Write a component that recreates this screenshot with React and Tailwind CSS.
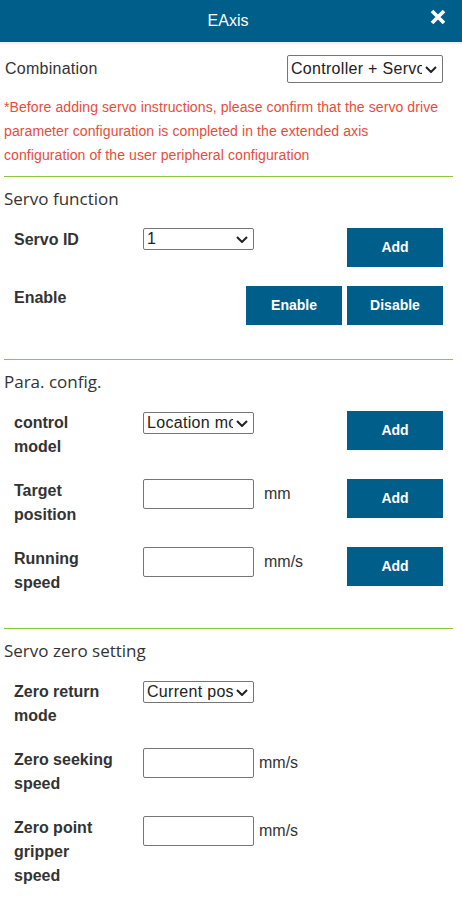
import React from "react";

function Chevron() {
  return (
    <svg width="12" height="7" viewBox="0 0 12 7" className="shrink-0 ml-[3px] mr-[5px]">
      <path d="M1 1l5 5 5-5" fill="none" stroke="#222" strokeWidth="2" />
    </svg>
  );
}

function Select({ value, className }) {
  return (
    <div className={`flex items-center border border-[#767676] rounded-[2px] bg-white ${className}`}>
      <span className="flex-1 min-w-0 overflow-hidden whitespace-nowrap pl-[3px] text-[16px] leading-[20px] tracking-[0.3px] text-[#222]">
        {value}
      </span>
      <Chevron />
    </div>
  );
}

function Btn({ children }) {
  return (
    <button className="w-[96px] h-[39px] bg-[#005e8a] text-white font-bold text-[14px] shrink-0">
      {children}
    </button>
  );
}

function Label({ children }) {
  return (
    <div className="w-[129px] shrink-0 pr-[27px] font-bold text-[16px] leading-[24px] text-[#333]">
      {children}
    </div>
  );
}

function Field({ unit, gap }) {
  return (
    <div className="flex items-center h-[30px]">
      <div className="w-[111px] h-[30px] border border-[#767676] rounded-[2px] bg-white" />
      {unit && <span className={`${gap} text-[16px] text-[#333]`}>{unit}</span>}
    </div>
  );
}

function Section({ title, gap, pb, children }) {
  return (
    <div>
      <div className="h-px bg-[#8cc63f]" />
      <h3 className="mt-[10px] [font-family:'Open_Sans',sans-serif] text-[17px] leading-[24px] text-[#333]">{title}</h3>
      <div className={`mt-[17px] pl-[10px] pr-[10px] flex flex-col ${gap} ${pb}`}>{children}</div>
    </div>
  );
}

export default function App() {
  return (
    <div className="w-[462px] min-h-[901px] bg-white [font-family:'Liberation_Sans',Arial,sans-serif]">
      <div className="relative h-[42px] bg-[#005e8a] border-b-2 border-[#eeeeee] box-content flex items-center justify-center">
        <span className="text-white text-[16px] pr-[6px]">EAxis</span>
        <svg width="16" height="16" viewBox="0 0 16 16" className="absolute right-[16px] top-[9px]">
          <path d="M2 2l12 12M14 2L2 14" stroke="#fff" strokeWidth="3.6" />
        </svg>
      </div>

      <div className="pl-[4px] pr-[9px]">
        <div className="mt-[11px] flex items-center justify-between pr-[10px]">
          <span className="pl-px text-[16px] tracking-[0.25px] text-[#333]">Combination</span>
          <Select value="Controller + Servo" className="w-[156px] h-[28px]" />
        </div>
        <p className="mt-[12px] text-[14px] leading-[24px] tracking-[0.1px] text-[#e74c3c]">
          *Before adding servo instructions, please confirm that the servo drive
          <br />
          parameter configuration is completed in the extended axis
          <br />
          configuration of the user peripheral configuration
        </p>

        <div className="mt-[9px]">
          <Section title="Servo function" gap="gap-[19px]" pb="pb-[34px]">
            <div className="flex items-start">
              <Label>Servo ID</Label>
              <Select value="1" className="w-[111px] h-[22px]" />
              <div className="flex-1" />
              <Btn>Add</Btn>
            </div>
            <div className="flex items-start">
              <Label>Enable</Label>
              <div className="flex-1" />
              <div className="flex gap-[5px]">
                <Btn>Enable</Btn>
                <Btn>Disable</Btn>
              </div>
            </div>
          </Section>

          <Section title="Para. config." gap="gap-[20px]" pb="pb-[33px]">
            <div className="flex items-start">
              <Label>control model</Label>
              <Select value="Location mode" className="w-[111px] h-[22px] mt-px" />
              <div className="flex-1" />
              <Btn>Add</Btn>
            </div>
            <div className="flex items-start">
              <Label>Target position</Label>
              <Field unit="mm" gap="ml-[10px]" />
              <div className="flex-1" />
              <Btn>Add</Btn>
            </div>
            <div className="flex items-start">
              <Label>Running speed</Label>
              <Field unit="mm/s" gap="ml-[10px]" />
              <div className="flex-1" />
              <Btn>Add</Btn>
            </div>
          </Section>

          <Section title="Servo zero setting" gap="gap-[20px]" pb="pb-[13px]">
            <div className="flex items-start">
              <Label>Zero return mode</Label>
              <Select value="Current position" className="w-[111px] h-[22px] mt-px" />
            </div>
            <div className="flex items-start">
              <Label>Zero seeking speed</Label>
              <Field unit="mm/s" gap="ml-[5px]" />
            </div>
            <div className="flex items-start">
              <Label>Zero point gripper speed</Label>
              <Field unit="mm/s" gap="ml-[5px]" />
            </div>
          </Section>
        </div>
      </div>
    </div>
  );
}
